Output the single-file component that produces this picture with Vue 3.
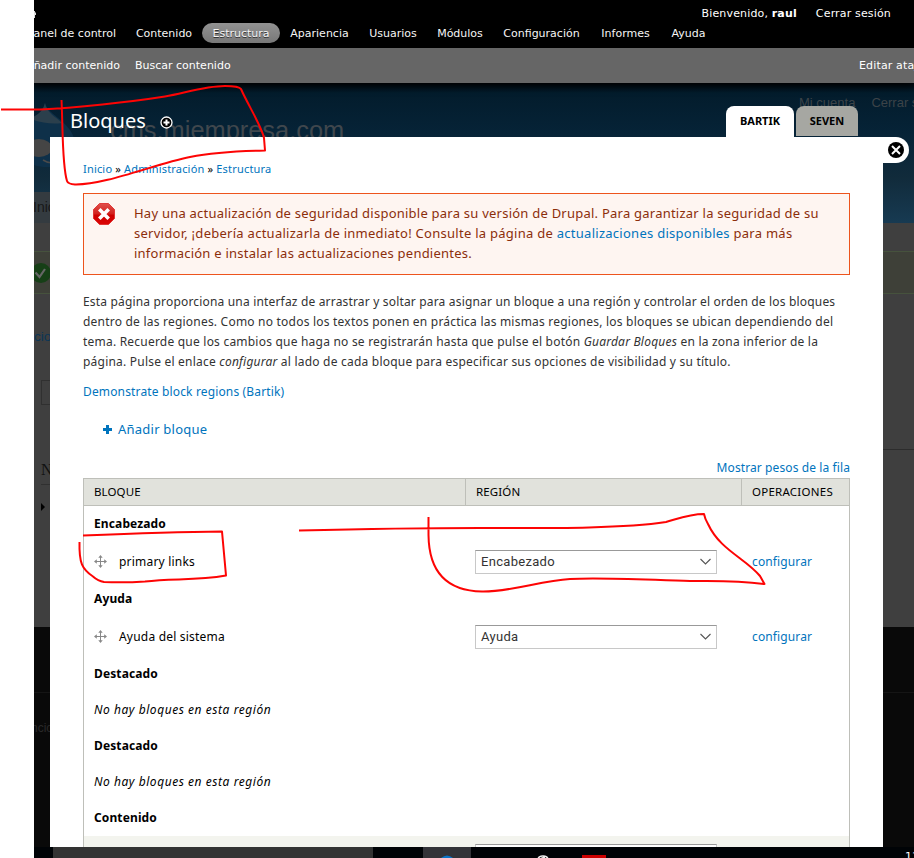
<script setup>
const menu = ['Panel de control', 'Contenido', 'Estructura', 'Apariencia', 'Usuarios', 'Módulos', 'Configuración', 'Informes', 'Ayuda']

const rows = [
  { type: 'region', text: 'Encabezado' },
  { type: 'block', text: 'primary links', region: 'Encabezado' },
  { type: 'region', text: 'Ayuda' },
  { type: 'block', text: 'Ayuda del sistema', region: 'Ayuda' },
  { type: 'region', text: 'Destacado' },
  { type: 'empty', text: 'No hay bloques en esta región' },
  { type: 'region', text: 'Destacado' },
  { type: 'empty', text: 'No hay bloques en esta región' },
  { type: 'region', text: 'Contenido' },
]
</script>

<template>
  <div class="stage">
    <div class="screen">
      <!-- dimmed site under the overlay -->
      <div class="site">
        <div class="site-header">
          <div class="user-links"><span>Mi cuenta</span><span>Cerrar sesión</span></div>
          <div class="brand">
            <svg class="drop" width="52" height="66" viewBox="0 0 52 66">
              <path d="M20 0 C22 12 50 20 50 42 C50 56 38 64 22 64 C6 64 -6 56 -6 40 C-6 22 16 20 20 0Z" fill="#0e3049" />
              <path d="M20 0 C21 9 31 14 37 20 C24 22 12 18 4 16 C13 12 18 8 20 0Z" fill="#2b3f4c" />
              <ellipse cx="14" cy="45" rx="13" ry="9" fill="#454545" />
              <path d="M18 57 q8 5 13 1" stroke="#4a4a4a" stroke-width="1.5" fill="none" />
            </svg>
            <span class="site-name">cms.miempresa.com</span>
          </div>
          <div class="site-tab">Inicio</div>
        </div>
        <div class="site-status">
          <svg width="20" height="20" viewBox="0 0 20 20">
            <circle cx="10" cy="10" r="10" fill="#163f16" />
            <path d="M4.500 9.500 L8.500 14 L14 6" stroke="#666" stroke-width="2.200" fill="none" />
          </svg>
        </div>
        <div class="site-columns">
          <div class="site-body">
            <div class="site-crumb">cio</div>
            <div class="site-search"></div>
            <div class="site-title">Navegación</div>
            <div class="site-leaf"></div>
          </div>
          <div class="site-content"></div>
        </div>
        <div class="site-footer"><span>ncio</span></div>
      </div>

      <div class="front">
        <header class="toolbar">
          <div class="bar account">
            <svg class="home" width="4" height="8" viewBox="0 0 4 8"><path d="M0 1h1v1.500h1V5H1v3H0z" fill="#ddd" /></svg>
            <span>Bienvenido, <b>raul</b></span><span>Cerrar sesión</span>
          </div>
          <nav class="menu">
            <a v-for="m in menu" :key="m" :class="{ active: m === 'Estructura' }">{{ m }}</a>
          </nav>
          <div class="drawer">
            <span class="add">Añadir contenido</span><span>Buscar contenido</span><span class="edit">Editar atajos</span>
          </div>
        </header>

        <div class="titlebar">
          <h1>Bloques</h1>
          <svg class="plus" width="13" height="13" viewBox="0 0 13 13">
            <circle cx="6.500" cy="6.500" r="5.500" fill="#000" stroke="#fff" stroke-width="1.300" />
            <path d="M6.500 3.500v6M3.500 6.500h6" stroke="#fff" stroke-width="2" />
          </svg>
          <div class="tabs"><span class="tab on">BARTIK</span><span class="tab">SEVEN</span></div>
        </div>

        <div class="dialog-row">
          <main class="dialog">
            <div class="crumbs"><a>Inicio</a> » <a>Administración</a> » <a>Estructura</a></div>
            <div class="alert">
              <svg width="22" height="22" viewBox="0 0 22 22">
                <defs><linearGradient id="stop" x1="0" y1="0" x2="0" y2="1"><stop offset="0" stop-color="#e0504c" /><stop offset=".5" stop-color="#d2201c" /><stop offset=".55" stop-color="#cc0000" /><stop offset="1" stop-color="#dc0505" /></linearGradient></defs>
                <path d="M6.500 .5h9l6 6v9l-6 6h-9l-6-6v-9z" fill="url(#stop)" stroke="#d22" stroke-width=".8" />
                <path d="M6.300 6.300l9.400 9.400M15.700 6.300l-9.400 9.400" stroke="#fff" stroke-width="3.600" />
              </svg>
              <p>
                Hay una actualización de seguridad disponible para su versión de Drupal. Para garantizar la seguridad de su<br>
                <span class="wide">servidor, ¡debería actualizarla de inmediato! Consulte la página de <a>actualizaciones disponibles</a> para más</span><br>
                información e instalar las actualizaciones pendientes.
              </p>
            </div>
            <p class="help">
              Esta página proporciona una interfaz de arrastrar y soltar para asignar un bloque a una región y controlar el orden de los bloques<br>
              <span class="wide">dentro de las regiones. Como no todos los textos ponen en práctica las mismas regiones, los bloques se ubican dependiendo del</span><br>
              <span class="wide">tema. Recuerde que los cambios que haga no se registrarán hasta que pulse el botón <i>Guardar Bloques</i> en la zona inferior de la</span><br>
              <span class="wide">página. Pulse el enlace <i>configurar</i> al lado de cada bloque para especificar sus opciones de visibilidad y su título.</span>
            </p>
            <a class="demo">Demonstrate block regions (Bartik)</a>
            <a class="add-block">
              <svg width="9" height="9" viewBox="0 0 9 9"><path d="M3 0h3v3h3v3H6v3H3V6H0V3h3z" fill="#0074bd" /></svg>
              <span>Añadir bloque</span>
            </a>
            <a class="weights">Mostrar pesos de la fila</a>
            <div class="table">
              <div class="tr th"><span>BLOQUE</span><span>REGIÓN</span><span>OPERACIONES</span></div>
              <div v-for="(r, i) in rows" :key="i" class="tr" :class="r.type">
                <template v-if="r.type === 'block'">
                  <span class="name">
                    <svg width="13" height="13" viewBox="0 0 13 13">
                      <path d="M6.500 1v11M1 6.500h11" stroke="#888" stroke-width="1" />
                      <path d="M6.500 0l2.200 2.800H4.300zM6.500 13l2.200-2.800H4.300zM0 6.500l2.800-2.200v4.400zM13 6.500l-2.800-2.200v4.400z" fill="#888" />
                    </svg>
                    <span>{{ r.text }}</span>
                  </span>
                  <span class="select">{{ r.region }}
                    <svg width="13" height="8" viewBox="0 0 13 8"><path d="M1.500 1l5 5 5-5" fill="none" stroke="#555" stroke-width="1.100" /></svg>
                  </span>
                  <a class="op">configurar</a>
                </template>
                <span v-else>{{ r.text }}</span>
              </div>
              <div class="tr stripe"><span></span><span class="select peek"></span></div>
            </div>
          </main>
          <div class="close">
            <svg width="16" height="16" viewBox="0 0 16 16"><circle cx="8" cy="8" r="8" fill="#000" /><path d="M4 4l8 8M12 4l-8 8" stroke="#fff" stroke-width="2" /></svg>
          </div>
        </div>

        <footer class="taskbar">
          <span class="search-slot"></span>
          <span class="app"><svg width="14" height="3" viewBox="0 0 14 3"><path d="M1 3Q7-2 13 3z" fill="#0a74c8" /></svg></span>
          <svg class="arc" width="12" height="4" viewBox="0 0 12 4"><path d="M1 4Q2 .8 6 1Q10 .8 11 4M4 3.500l4-1.500" fill="none" stroke="#eee" stroke-width="1.600" /></svg>
          <span class="red"></span>
          <span class="clock">11</span>
        </footer>
      </div>
    </div>

    <!-- hand-drawn annotations -->
    <svg class="marks" width="914" height="858" viewBox="0 0 914 858">
      <path d="M1 109.500H40C75 108 130 102 165 96.500C185 93 205 86 225 86Q239 86 241 89C247 103 262 127 264 138L265 150.500C240 151 215 152 190 157C155 164 105 185 75 184.500Q68 184 67 181C62 165 63 130 61.500 100" />
      <path d="M83 535.500C120 534 170 532 222 531.500L226 575.500C195 581 172 578 145 581.500C130 582.500 115 582.500 104 582Q98 581 93 576.500C82 569 79 563 79.500 542" />
      <path d="M299 530.500C360 529 430 528 480 528C540 528 620 529 666 522C680 518 690 514 704 514Q705 519 708 524C720 550 745 558 760 576L764.500 584C735 580 710 581 690 581C650 580 600 577 570 579C540 581 510 592 482 591.500C455 591 429 580 428.500 535V517" />
    </svg>
  </div>
</template>

<style>
body { margin: 0; overflow: hidden; }
</style>

<style scoped>
.stage { position: relative; width: 914px; height: 858px; padding-left: 34px; box-sizing: border-box; background: #fff; overflow: hidden; }
.marks { position: absolute; z-index: 2; left: 0; top: 0; fill: none; stroke: #fd0404; stroke-width: 2; stroke-linejoin: round; }
.screen { display: grid; width: 880px; height: 858px; overflow: hidden; }
.site, .front { grid-area: 1 / 1; min-width: 0; height: 858px; overflow: hidden; }
.front { display: flex; flex-direction: column; z-index: 1; font-family: "Noto Sans", sans-serif; font-size: 12px; color: #000; }
a { color: #0074bd; }

.site { display: flex; flex-direction: column; background: #3f3f3f; font-family: "Liberation Sans", sans-serif; }
.site-header { height: 140px; margin-top: 83px; flex: none; background: linear-gradient(#000a12, #031c2c 10px, #062337 50px, #112b3b 95px, #173a52 140px); overflow: hidden; }
.user-links { display: flex; gap: 16px; justify-content: flex-start; margin-left: 765px; padding-top: 12px; height: 8px; line-height: 16px; font-size: 13px; color: #3c4348; white-space: nowrap; }
.brand { display: flex; height: 89px; }
.drop { flex: none; margin-left: -9px; }
.site-name { margin-left: 33px; margin-top: 12px; font-size: 25.4px; line-height: 30px; color: #40474d; }
.site-tab { width: 60px; height: 31px; line-height: 31px; font-size: 14px; text-indent: -1px; background: #343b40; color: #171717; }
.site-status { flex: none; height: 41px; margin-top: 28px; border-top: 1px solid #46523d; border-bottom: 1px solid #46523d; background: #3e4038; display: flex; align-items: center; }
.site-status svg { margin-left: -3px; }
.site-columns { flex: none; display: flex; height: 333px; }
.site-body { width: 200px; padding-left: 7px; }
.site-content { flex: 1; height: 155px; border-bottom: 1px solid #2c2c2c; }
.site-crumb { margin-left: -7px; padding-top: 33px; font-size: 13.5px; line-height: 20px; color: #0b3656; }
.site-search { height: 23px; margin-top: 33px; border: 1px solid #303030; }
.site-title { margin-top: 54px; height: 25px; border-bottom: 1px solid #303030; font: 16px/22px "Liberation Serif", serif; color: #111; }
.site-leaf { margin-top: 18px; width: 0; border: 4px solid transparent; border-left-color: #000; border-right: 0; }
.site-footer { flex: 1; background: #090909; color: #292929; font-size: 12px; }
.site-footer span { display: block; margin-top: 65px; padding-top: 27px; line-height: 16px; border-top: 1px solid #151515; text-indent: -3px; }

.toolbar { flex: none; height: 83px; font-family: "DejaVu Sans", sans-serif; font-size: 11px; color: #fff; box-shadow: 0 2px 8px #000; }
.account { display: flex; gap: 19px; height: 23px; padding: 5px 23px 0 0; box-sizing: border-box; line-height: 18px; letter-spacing: .16px; background: #000; }
.home { margin-top: 5px; margin-right: auto; }
.menu { display: grid; grid-template-columns: 92px 76px 78px 79px 68px 66px 97px 71px 55px; height: 25px; background: #000; }
.menu a { height: 20px; line-height: 21px; text-align: center; white-space: nowrap; color: #f5f5f5; }
.menu a:first-child { display: flex; justify-content: flex-end; padding-right: 10px; }
.menu .active { border-radius: 10px; background: linear-gradient(#929292, #787878); text-shadow: 0 1px #333; }
.drawer { display: flex; height: 35px; background: #666; line-height: 35px; white-space: nowrap; overflow: hidden; }
.add { width: 86px; display: flex; justify-content: flex-end; margin-right: 15px; flex: none; }
.edit { margin-left: auto; width: 55px; letter-spacing: .15px; }

.titlebar { flex: none; display: flex; height: 54px; padding-left: 36px; }
h1 { margin: 0; padding-top: 22px; font-size: 20px; line-height: 32px; font-weight: 400; color: #fff; width: 90px; }
.plus { margin-top: 33px; }
.tabs { display: flex; gap: 2px; margin-left: 553px; margin-top: 23px; }
.tab { width: 62px; height: 30px; border-radius: 8px 8px 0 0; background: #a6a7a2; font-weight: 700; font-size: 11px; line-height: 30px; text-align: center; }
.on { width: 68px; height: 31px; background: #fff; }

.dialog-row { display: flex; height: 710px; flex: none; margin-left: 16px; overflow: hidden; }
.dialog { width: 833px; height: 710px; padding: 22px 33px 0; box-sizing: border-box; background: #fff; overflow: hidden; }
.close { width: 26px; height: 26px; border-radius: 0 13px 13px 0; background: #fff; display: flex; align-items: center; justify-content: center; }
.crumbs { height: 34px; line-height: 20px; font-size: 11px; letter-spacing: .18px; }
.alert { display: flex; height: 80px; border: 1px solid #ed541d; background: #fef5f1; color: #8c2e0b; }
.alert svg { flex: none; margin: 9px 0 0 9px; }
.alert p { margin: 9px 0 0 19px; line-height: 20px; font-size: 13px; letter-spacing: .235px; white-space: nowrap; }
.alert .wide { letter-spacing: .27px; }
.help { margin: 17px 0 0; line-height: 20px; font-size: 12px; letter-spacing: .175px; white-space: nowrap; color: #333; }
.help .wide { letter-spacing: .215px; }
.demo { display: block; margin-top: 10px; line-height: 20px; font-size: 12px; letter-spacing: .15px; }
.add-block { display: flex; gap: 6px; align-items: center; margin: 17px 0 0 20px; height: 20px; font-size: 13px; letter-spacing: .23px; }
.weights { display: block; margin-top: 18px; height: 21px; line-height: 21px; text-align: right; font-size: 12px; letter-spacing: .1px; }
.table { border: 1px solid #bebfb9; border-bottom: 0; }
.tr { display: grid; grid-template-columns: 382px 276px 1fr; height: 36px; align-items: center; font-size: 12px; letter-spacing: .12px; }
.tr > span:first-child { padding-left: 10px; }
.th { height: 26px; border-bottom: 1px solid #bebfb9; background: #e1e2dc; font-size: 11.5px; }
.th span { height: 26px; line-height: 26px; box-sizing: border-box; padding-left: 10px; border-right: 1px solid #bebfb9; }
.th span:last-child { border-right: 0; letter-spacing: .25px; }
.region span, .empty span { padding-bottom: 1px; }
.region { font-weight: 700; }
.empty { font-style: italic; letter-spacing: .55px; }
.block { height: 39px; }
.name { display: flex; align-items: center; gap: 12px; }
.name span { padding-bottom: 1px; letter-spacing: .2px; }
.select { display: flex; align-items: center; justify-content: space-between; width: 242px; height: 24px; box-sizing: border-box; margin-left: 9px; padding: 0 4px 0 5px; border: 1px solid #c8c8c8; border-top-color: #999; background: #fff; font: 13px Roboto, sans-serif; letter-spacing: .3px; color: #333; }
.op { padding-left: 10px; }
.stripe { height: 40px; align-items: start; background: #f3f4ee; }
.peek { margin-top: 8px; }

.taskbar { flex: none; display: flex; height: 11px; padding-left: 19px; background: #000306; overflow: hidden; }
.search-slot { width: 320px; background: #333; }
.app { width: 48px; margin-left: 50px; background: #333338; display: flex; align-items: flex-end; justify-content: center; }
.arc { margin: 8px 0 0 66px; }
.red { width: 24px; height: 3px; margin: 8px 0 0 33px; background: #c00; }
.clock { margin-left: auto; margin-right: -5px; padding-top: 4px; font: 11px/11px "DejaVu Sans", sans-serif; color: #fff; }
</style>
